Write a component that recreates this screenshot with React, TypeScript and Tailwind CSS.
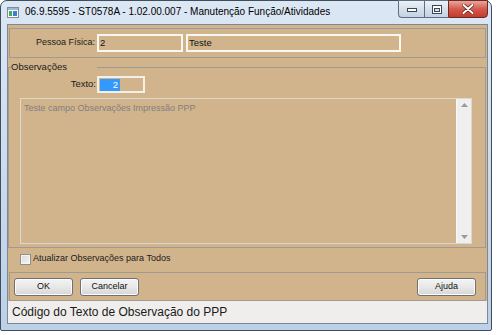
import React from "react";

function AppIcon() {
  return (
    <svg width="12" height="11" viewBox="0 0 12 11" className="shrink-0">
      <rect x="0.5" y="0.5" width="11" height="10" fill="#ffffff" stroke="#7f8c99" />
      <rect x="1" y="1" width="10" height="2" fill="#9fb7d3" />
      <rect x="2" y="4" width="3" height="5" fill="#3fae5a" />
      <rect x="6" y="4" width="4" height="5" fill="#3b7fd0" />
    </svg>
  );
}

function Btn({ label }: { label: string }) {
  return (
    <div className="w-[59px] h-[18px] rounded-[3px] border border-[#707070] bg-gradient-to-b from-[#f3f3f3] via-[#e8e8e8] to-[#d6d6d6] flex items-center justify-center text-[9px] text-[#111] shadow-[inset_0_0_0_1px_#fcfcfc]">
      {label}
    </div>
  );
}

export default function App() {
  return (
    <div className="w-[500px] h-[335px] bg-white font-['Liberation_Sans',Arial,sans-serif] text-[#111]">
      <div className="w-[492px] h-[331px] border border-[#3f4d5c] rounded-t-[7px] rounded-b-[2px] bg-gradient-to-b from-[#dce7f4] to-[#bcd0e8] flex flex-col pl-[6px] pr-[3px] pb-[6px]">
        {/* title bar */}
        <div className="h-[23px] flex items-start shrink-0">
          <div className="mt-[6px]">
            <AppIcon />
          </div>
          <div className="ml-[6px] mt-[5px] text-[10px] leading-[12px] text-black whitespace-nowrap">
            06.9.5595 - ST0578A - 1.02.00.007 - Manutenção Função/Atividades
          </div>
          <div className="ml-auto -mt-[1px] flex h-[18px]">
            <div className="w-[26px] h-[18px] border border-[#5f6f82] border-r-0 rounded-bl-[4px] bg-gradient-to-b from-[#edf2f8] via-[#d6e0ec] to-[#c3d2e4] flex items-center justify-center">
              <svg width="10" height="5" viewBox="0 0 10 5">
                <rect x="0.5" y="1.5" width="9" height="3" fill="#ffffff" stroke="#3a4756" />
              </svg>
            </div>
            <div className="w-[24px] h-[18px] border border-[#5f6f82] border-r-0 bg-gradient-to-b from-[#edf2f8] via-[#d6e0ec] to-[#c3d2e4] flex items-center justify-center">
              <svg width="10" height="9" viewBox="0 0 10 9">
                <rect x="0.5" y="0.5" width="9" height="8" fill="#ffffff" stroke="#3a4756" />
                <rect x="2.5" y="3.5" width="5" height="3" fill="#d6e0ec" stroke="#3a4756" />
              </svg>
            </div>
            <div className="w-[40px] h-[18px] border border-[#6b2a24] rounded-br-[4px] bg-gradient-to-b from-[#e8a59b] via-[#d4594c] to-[#c23b2c] flex items-center justify-center">
              <svg width="12" height="10" viewBox="0 0 12 10">
                <path d="M1.5 1 L10.5 9 M10.5 1 L1.5 9" stroke="#5a1d17" strokeWidth="3.4" strokeLinecap="round" />
                <path d="M1.5 1 L10.5 9 M10.5 1 L1.5 9" stroke="#ffffff" strokeWidth="2" strokeLinecap="round" />
              </svg>
            </div>
          </div>
        </div>

        {/* client area */}
        <div className="flex-1 border border-[#7d8896] bg-[#d2b48c] flex flex-col">
          {/* Pessoa Física panel */}
          <div className="mt-[3px] mx-[1px] h-[30px] border border-[#a09b92] flex items-center">
            <div className="w-[85px] text-right text-[9px] text-[#1a1a1a]">Pessoa Física:</div>
            <div className="ml-[2px] w-[86px] h-[18px] border-2 border-[#fbf8f2] flex items-center pl-[1px] text-[9.5px]">2</div>
            <div className="ml-[3px] w-[215px] h-[18px] border-2 border-[#fbf8f2] flex items-center pl-[1px] text-[9.5px]">Teste</div>
          </div>

          {/* Observações group */}
          <fieldset className="mt-[3px] mr-[1px] h-[187px] border border-[#a09b92] flex flex-col">
            <legend className="ml-[2px] w-[86px] text-[9.5px] leading-[12px] text-[#1a1a1a]">Observações</legend>
            <div className="mt-[3px] flex items-center h-[17px]">
              <div className="w-[87px] text-right text-[9.5px] text-[#1a1a1a]">Texto:</div>
              <div className="ml-[1px] w-[48px] h-[17px] border-2 border-[#f3f0ea] flex items-center pl-[1px]">
                <div className="w-[20px] h-[12px] bg-[#3399ff] text-white text-[9.5px] leading-[12px] text-right pr-[2px]">2</div>
              </div>
            </div>
            <div className="mt-[5px] ml-[11px] w-[452px] h-[146px] border border-[#dcd8d0] flex">
              <div className="flex-1 pl-[3px] pt-[3px] text-[9px] text-[#808080]">
                Teste campo Observações Impressão PPP
              </div>
              <div className="w-[15px] bg-[#efefef] border-l border-[#f8f8f8] flex flex-col items-center justify-between py-[4px]">
                <svg width="7" height="4" viewBox="0 0 7 4">
                  <path d="M0 4 L3.5 0 L7 4 Z" fill="#9a9a9a" />
                </svg>
                <svg width="7" height="4" viewBox="0 0 7 4">
                  <path d="M0 0 L7 0 L3.5 4 Z" fill="#9a9a9a" />
                </svg>
              </div>
            </div>
          </fieldset>

          {/* checkbox row */}
          <div className="mt-[4px] ml-[12px] h-[14px] flex items-center">
            <div className="w-[11px] h-[11px] border border-[#8e8f8f] bg-gradient-to-br from-[#d9d9d9] to-[#f6f6f6] shadow-[inset_0_0_0_1px_#f4f4f4]" />
            <div className="ml-[2px] text-[9px] text-[#1a1a1a]">Atualizar Observações para Todos</div>
          </div>

          {/* buttons panel */}
          <div className="mt-[6px] mx-[1px] h-[29px] border border-[#a09b92] flex items-center pl-[4px] pr-[9px]">
            <Btn label="OK" />
            <div className="ml-[7px]">
              <Btn label="Cancelar" />
            </div>
            <div className="ml-auto">
              <Btn label="Ajuda" />
            </div>
          </div>

          {/* status bar */}
          <div className="flex-1 bg-[#f0eeec] flex items-center pl-[4px] text-[12px] text-[#1a1a1a]">
            Código do Texto de Observação do PPP
          </div>
        </div>
      </div>
    </div>
  );
}
